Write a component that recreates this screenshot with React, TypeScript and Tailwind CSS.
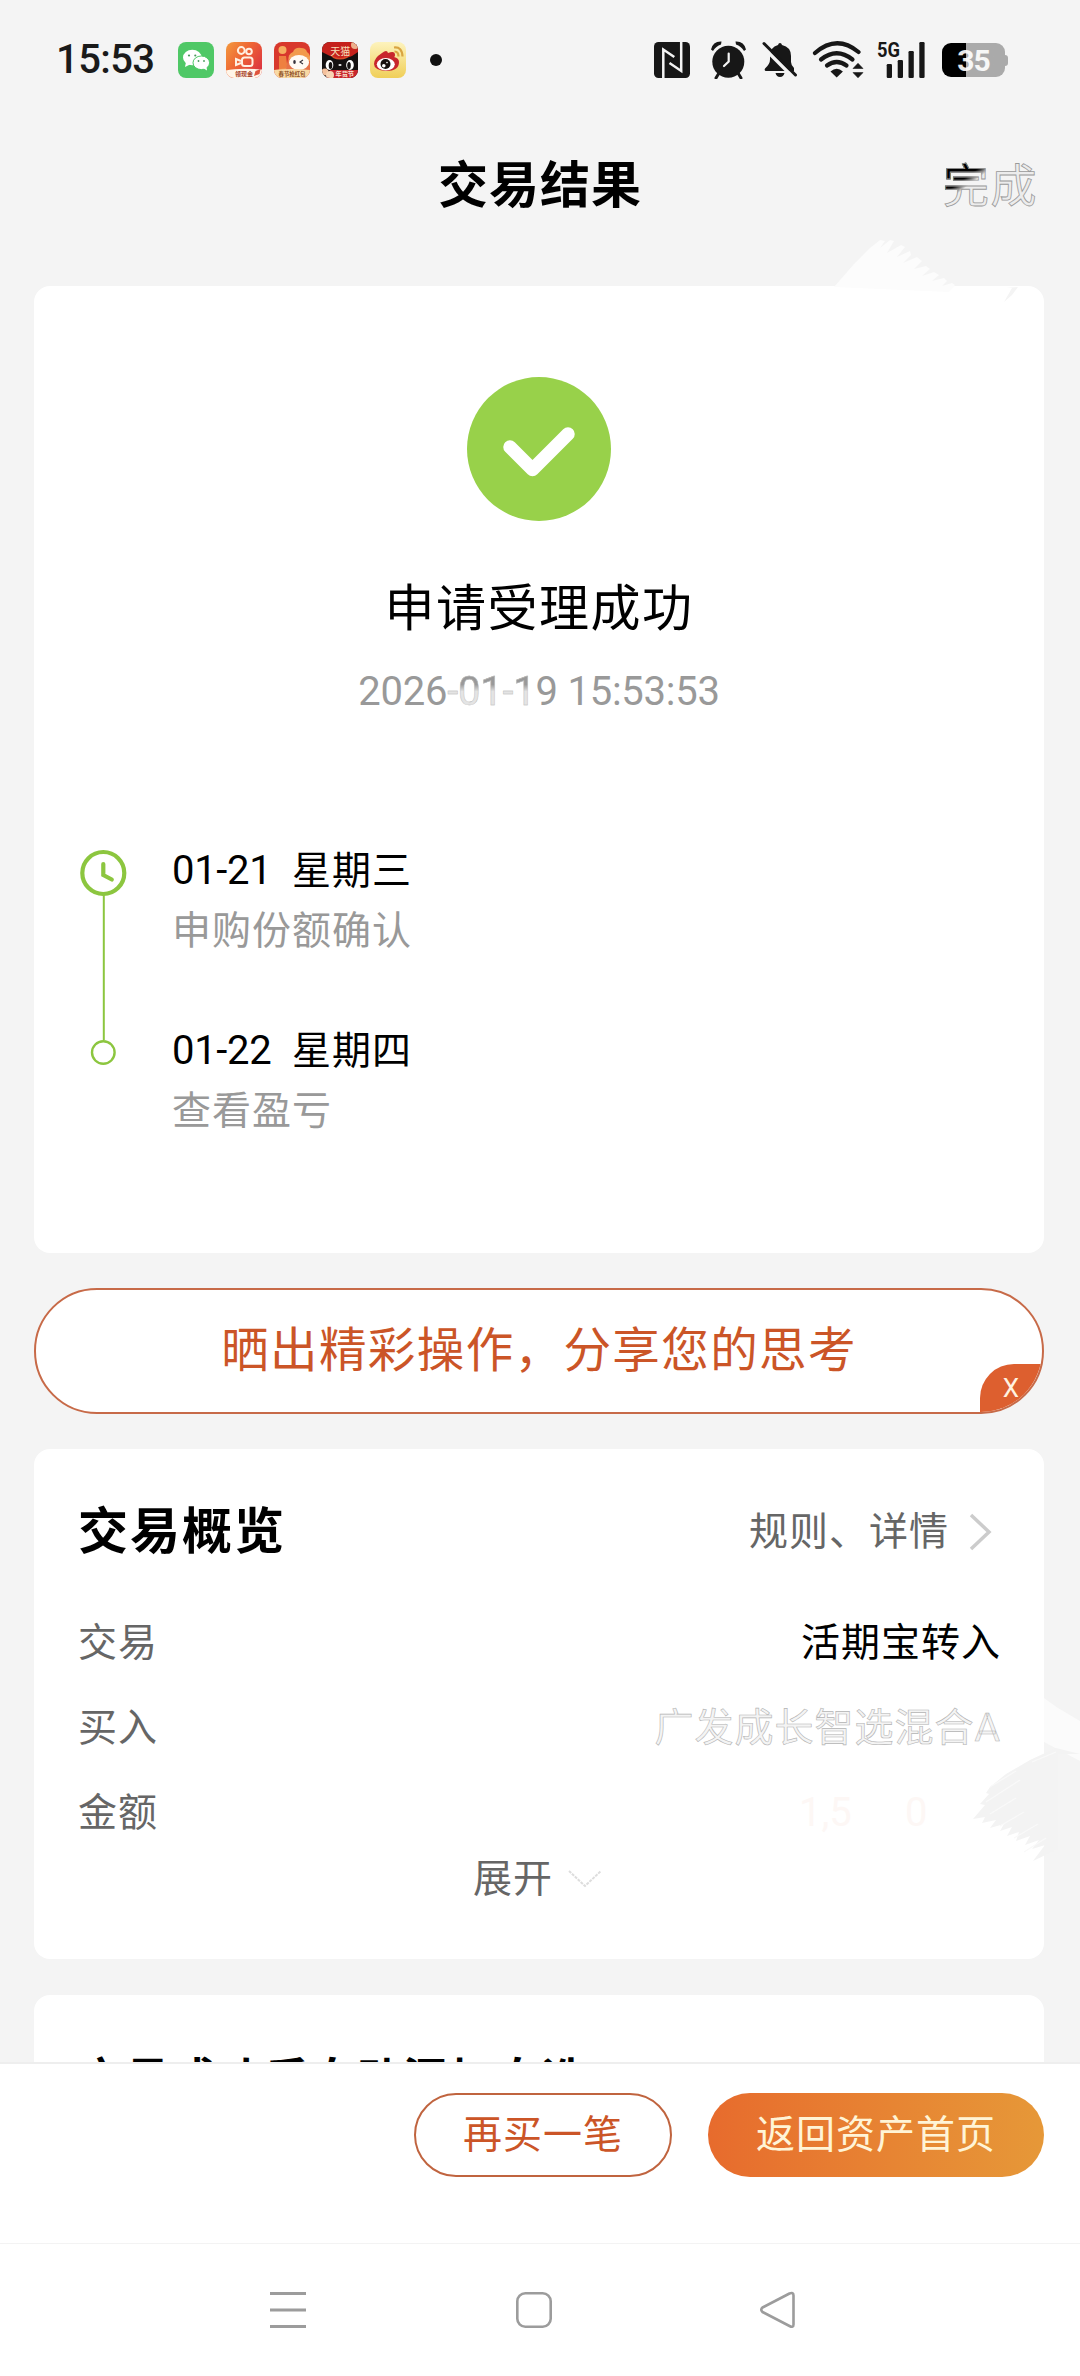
import React from "react";

const steps = [
  { date: "01-21", day: "星期三", note: "申购份额确认" },
  { date: "01-22", day: "星期四", note: "查看盈亏" },
];

export default function App() {
  return (
    <div className="relative w-[1080px] h-[2376px] flex flex-col overflow-hidden bg-[#f4f4f4] text-black font-['Roboto','Noto_Sans_CJK_SC',sans-serif]">
      <StatusBar />
      <Header />
      <main className="flex-1 min-h-0 overflow-hidden pl-[34px] pr-[36px] flex flex-col">
        <ResultCard />
        <ShareButton />
        <OverviewCard />
        <div className="shrink-0 mt-9 h-[200px] rounded-2xl bg-white pt-[55px] pl-[45px]">
          <div className="text-[44.5px] leading-[60px] font-bold tracking-[1.8px]">
            交易成功后自动添加自选
          </div>
        </div>
      </main>
      <Footer />
      <NavBar />
      <BrushMarks />
    </div>
  );
}

function StatusBar() {
  return (
    <div className="h-[120px] shrink-0 flex items-center pl-14 pr-[72px]">
      <div className="w-[122px] text-[40px] leading-none font-medium tracking-[-0.6px] text-[#1a1a1a]">
        15:53
      </div>
      <div className="flex gap-3">
        <WeChatIcon />
        <KuaishouIcon />
        <PartyIcon />
        <TmallIcon />
        <WeiboIcon />
      </div>
      <div className="ml-6 w-3 h-3 rounded-full bg-[#111]" />
      <div className="ml-auto flex items-center">
        <NfcIcon />
        <AlarmIcon />
        <BellOffIcon />
        <WifiIcon />
        <SignalIcon />
        <Battery />
      </div>
    </div>
  );
}

function WeChatIcon() {
  return (
    <svg width="36" height="36" viewBox="0 0 36 36">
      <rect width="36" height="36" rx="8" fill="#4fc866" />
      <ellipse cx="14.3" cy="15.5" rx="9.3" ry="7.8" fill="#fff" />
      <path d="M8 20l-1 5 5-2.500z" fill="#fff" />
      <ellipse cx="23.300" cy="20.800" rx="8.300" ry="6.800" fill="#fff" stroke="#4fc866" strokeWidth="1" />
      <path d="M25 26l4 2.500-.5-4z" fill="#fff" />
      <g fill="#4a9a5c">
        <circle cx="11" cy="13.500" r="1.100" />
        <circle cx="17.300" cy="13.500" r="1.100" />
        <circle cx="20.500" cy="19" r=".9" />
        <circle cx="26" cy="19" r=".9" />
      </g>
    </svg>
  );
}

function KuaishouIcon() {
  return (
    <svg width="36" height="36" viewBox="0 0 36 36">
      <defs>
        <linearGradient id="ks" x1="0" y1="0" x2="1" y2=".7">
          <stop offset="0" stopColor="#f39a3e" />
          <stop offset=".5" stopColor="#ee6434" />
          <stop offset="1" stopColor="#dc3540" />
        </linearGradient>
      </defs>
      <rect width="36" height="36" rx="8" fill="url(#ks)" />
      <path d="M0 28.500Q12 25.500 36 27.500V28a8 8 0 0 1-8 8H8a8 8 0 0 1-8-7.500z" fill="#fff5e8" />
      <g fill="none" stroke="#fff0e2" strokeWidth="2">
        <circle cx="15.300" cy="8.500" r="3.400" />
        <circle cx="23" cy="9.500" r="2.800" />
        <rect x="16" y="15.500" width="10.500" height="8.500" rx="2.500" />
        <path d="M15 19l-5-2v6l5-2" />
      </g>
      <text x="9" y="34" fontSize="6" fontWeight="700" fill="#a5402a">
        领现金
      </text>
      <path d="M28 34l1.500-5 5-2-1 5z" fill="#e0533c" />
    </svg>
  );
}

function PartyIcon() {
  return (
    <svg width="36" height="36" viewBox="0 0 36 36">
      <defs>
        <clipPath id="pt">
          <rect width="36" height="36" rx="8" />
        </clipPath>
      </defs>
      <g clipPath="url(#pt)">
        <rect width="36" height="36" fill="#d8382c" />
        <circle cx="8.500" cy="8" r="4" fill="#f6ae60" />
        <path d="M5 14h7l1 8-1 6H5z" fill="#ee8040" />
        <path d="M15 17q-1-5 4-7 2-5 8-4 5 0 6 4 4 2 3 9z" fill="#f29a4c" />
        <path d="M0 28l12-2 3-13 21 2v13z" fill="#f2a260" opacity=".55" />
        <ellipse cx="25" cy="20.500" rx="10" ry="7.500" fill="#fffaf4" />
        <ellipse cx="20.500" cy="20" rx="1.300" ry="2" fill="#36323c" />
        <path d="M29 18l-3 2 3 2" fill="none" stroke="#36323c" strokeWidth="1.100" />
        <path d="M0 28q18-2 36 0v8H0z" fill="#f8d9a4" />
      </g>
      <text x="4.500" y="34" fontSize="5.400" fontWeight="700" fill="#8a4c1c">
        春节抢红包
      </text>
    </svg>
  );
}

function TmallIcon() {
  return (
    <svg width="36" height="36" viewBox="0 0 36 36">
      <defs>
        <clipPath id="tm">
          <rect width="36" height="36" rx="8" />
        </clipPath>
      </defs>
      <g clipPath="url(#tm)">
        <rect width="36" height="36" fill="#141010" />
        <path d="M0 0h36v10l-6 4q-11 5-22 0l-8-4z" fill="#c5211c" />
        <circle cx="33" cy="3" r="4" fill="#ecb08c" />
        <path d="M8 12q10 8 20 0l-3 4q-7 3-14 0z" fill="#d94a28" />
        <ellipse cx="7.500" cy="23" rx="3.800" ry="5" fill="#fff" />
        <ellipse cx="28" cy="23" rx="3.800" ry="5" fill="#fff" />
        <ellipse cx="8.500" cy="23.500" rx="1.800" ry="3.500" fill="#141010" />
        <ellipse cx="27" cy="23.500" rx="1.800" ry="3.500" fill="#141010" />
        <ellipse cx="18" cy="23" rx="1.600" ry=".9" fill="#eee" />
        <path d="M8 28h28v8H4z" fill="#c9252d" />
        <circle cx="3" cy="30" r="3.500" fill="#f4c09c" />
        <circle cx="8" cy="33" r="4" fill="#f8d4b4" />
      </g>
      <text x="8.200" y="12.800" fontSize="10" fill="#f7dfb8">
        天猫
      </text>
      <text x="13.500" y="34" fontSize="6.200" fontWeight="700" fill="#fbe6d4">
        年货节
      </text>
    </svg>
  );
}

function WeiboIcon() {
  return (
    <svg width="36" height="36" viewBox="0 0 36 36">
      <defs>
        <linearGradient id="wb" x1="0" y1="0" x2="0" y2="1">
          <stop offset="0" stopColor="#fdf3bd" />
          <stop offset="1" stopColor="#f0cf58" />
        </linearGradient>
      </defs>
      <rect width="36" height="36" rx="8" fill="url(#wb)" />
      <path d="M4 22q0-6 8-11 5-4 6 0 7-3 7 2 0 2-1 2 5 1 5 5 0 9-13 9-12-1-12-7z" fill="#c8262c" />
      <ellipse cx="15.800" cy="22.300" rx="9" ry="6.200" fill="#fff" />
      <circle cx="15.500" cy="22" r="5" fill="#17110f" />
      <circle cx="13.800" cy="23.700" r="1.800" fill="#fff" />
      <circle cx="17" cy="20.600" r=".8" fill="#fff" />
      <path d="M24 5.500q8-1 8.500 9M24.500 9.500q4 0 4 5" fill="none" stroke="#d9a441" strokeWidth="2.200" />
    </svg>
  );
}

function NfcIcon() {
  return (
    <svg width="36" height="36" viewBox="0 0 36 36">
      <rect width="36" height="36" rx="4.500" fill="#171717" />
      <g fill="none" stroke="#f4f4f4" strokeWidth="2.500">
        <path d="M9.300 36V7.500l11 7.500" />
        <path d="M15.500 21l11.700 8V0" />
      </g>
    </svg>
  );
}

function AlarmIcon() {
  return (
    <svg className="ml-5" width="37" height="38" viewBox="0 0 37 38">
      <circle cx="18.300" cy="20.700" r="16" fill="#171717" />
      <path d="M1 8.500Q3 0 11.500.5L11 3.500Q6 5 3 10z" fill="#171717" />
      <path d="M36 8.500Q34 0 25.500.5l.5 3Q31 5 34 10z" fill="#171717" />
      <path d="M9 32l-3 5M28 32l3 5" stroke="#171717" strokeWidth="3" strokeLinecap="round" />
      <path d="M18.700 12.500v8L14 25" fill="none" stroke="#f4f4f4" strokeWidth="2.200" strokeLinecap="round" />
    </svg>
  );
}

function BellOffIcon() {
  return (
    <svg className="ml-[15px]" width="36" height="38" viewBox="0 0 36 38">
      <path d="M18 2q1.500 0 2 2 9 2 9 11v6q0 3 3 6v3H3.500q-2-1.500.5-3.500 4-4 4-8v-3Q8 6 16 4q.5-2 2-2z" fill="#171717" />
      <path d="M13.500 32h9q-1 4-4.500 4t-4.500-4z" fill="#171717" />
      <path d="M0 5l32 32" stroke="#f4f4f4" strokeWidth="3.500" />
      <path d="M2 2.500l31.500 31.500" stroke="#171717" strokeWidth="3" strokeLinecap="round" />
    </svg>
  );
}

function WifiIcon() {
  return (
    <svg className="ml-[14px]" width="52" height="38" viewBox="0 0 52 38">
      <g fill="none" stroke="#171717" strokeWidth="4.200" strokeLinecap="round">
        <path d="M3 12Q24.700-7 46.500 11" />
        <path d="M9 18.500q15.700-12.500 31.500 0" />
        <path d="M15 24.500q9.700-7 19.500 0" />
      </g>
      <path d="M18.500 30.500q6.200-5.500 12.400 0l-6.200 6z" fill="#171717" />
      <path d="M46 22.300l5 5.200H41zM46 36.800l5-5.200H41z" fill="#171717" stroke="#171717" strokeWidth=".6" strokeLinejoin="round" />
    </svg>
  );
}

function SignalIcon() {
  return (
    <svg className="ml-[13px] overflow-visible" width="48" height="38" viewBox="0 0 48 38">
      <text x="0" y="16" fontSize="21" fontWeight="700" textLength="23" lengthAdjust="spacingAndGlyphs" fill="#171717">
        5G
      </text>
      <g fill="#171717">
        <rect x="9.700" y="23" width="5.300" height="14" rx="1.200" />
        <rect x="20.700" y="19" width="5.300" height="18" rx="1.200" />
        <rect x="31.500" y="10" width="5.300" height="27" rx="1.200" />
        <rect x="42.300" y="1" width="5.300" height="36" rx="1.200" />
      </g>
    </svg>
  );
}

function Battery() {
  return (
    <div className="ml-[17px] flex items-center">
      <div className="w-[63px] h-[34px] rounded-[9px] bg-linear-to-r from-black from-38% to-[#aaa] to-38% flex items-center justify-center">
        <span className="text-[30px] leading-none font-bold tracking-[-1px] text-white/90 pt-px">
          35
        </span>
      </div>
      <div className="w-[3px] h-[11px] rounded-r bg-[#aaa]" />
    </div>
  );
}

function Header() {
  return (
    <div className="h-[166px] shrink-0 grid grid-cols-3 items-start pt-[31px] px-[42px]">
      <div />
      <h1 className="text-center text-[50px] leading-[70px] font-bold tracking-[1px]">
        交易结果
      </h1>
      <button className="justify-self-end text-[46px] leading-[70px] tracking-[1.5px] text-transparent bg-clip-text bg-linear-to-br from-black from-30% to-[#ececec] to-38% [-webkit-text-stroke:0.8px_#9a9a9a]">
        完成
      </button>
    </div>
  );
}

function ResultCard() {
  return (
    <section className="shrink-0 h-[967px] rounded-2xl bg-white flex flex-col items-center pt-[91px]">
      <svg width="144" height="144" viewBox="0 0 144 144">
        <circle cx="72" cy="72" r="72" fill="#98d14a" />
        <path d="M43 70l22.500 22.500L101 57" fill="none" stroke="#fff" strokeWidth="13.500" strokeLinecap="round" strokeLinejoin="round" />
      </svg>
      <div className="mt-[54px] text-[50px] leading-[68px] tracking-[1.500px]">
        申请受理成功
      </div>
      <div className="mt-[19px] text-[40px] leading-[60px] tracking-[-0.25px] text-[#999] whitespace-pre">
        2026
        <span className="text-transparent bg-clip-text bg-linear-to-b from-[#999] from-35% to-[#e4e4e4] to-50% [-webkit-text-stroke:0.4px_#bbb]">
          -01-1
        </span>
        9 15:53:53
      </div>
      <div className="self-stretch mt-[119px] pl-[46px] flex">
        <svg className="mt-[7px]" width="48" height="220" viewBox="0 0 48 220">
          <g fill="none" stroke="#8cc63f">
            <circle cx="23.300" cy="25" r="21" strokeWidth="4.200" />
            <path d="M23.300 16v11l8.500 4.500" strokeWidth="4.200" strokeLinecap="round" />
            <path d="M23.800 47v145" strokeWidth="2" />
            <circle cx="23.300" cy="204.500" r="11.300" strokeWidth="2.400" />
          </g>
        </svg>
        <div className="ml-11 flex flex-col gap-[60px]">
          {steps.map((step) => (
            <div key={step.date}>
              <div className="flex text-[39px] leading-[60px]">
                <span className="w-[120px] text-[40px] tracking-[-0.3px]">{step.date}</span>
                <span className="tracking-[1px]">{step.day}</span>
              </div>
              <div className="text-[39px] leading-[60px] tracking-[1px] text-[#999]">
                {step.note}
              </div>
            </div>
          ))}
        </div>
      </div>
    </section>
  );
}

function ShareButton() {
  return (
    <button className="relative shrink-0 mt-[35px] h-[126px] rounded-full border-2 border-[#c76a48] bg-white overflow-hidden text-[47.5px] leading-[64px] tracking-[1.400px] text-[#cb5527]">
      晒出精彩操作，分享您的思考
      <span className="absolute right-0 bottom-0 w-[62px] h-[48px] rounded-tl-[34px] bg-[#dd5f2f] text-[26px] leading-[49px] tracking-normal text-[#fff2e0] text-center">
        X
      </span>
    </button>
  );
}

function Row({ label, children }: { label: string; children: React.ReactNode }) {
  return (
    <div className="h-[85px] flex items-center justify-between tracking-[1px]">
      <span className="text-[#666]">{label}</span>
      {children}
    </div>
  );
}

function OverviewCard() {
  return (
    <section className="shrink-0 mt-[35px] h-[510px] rounded-2xl bg-white pl-11 pr-[43px] pt-[49px] text-[39px] leading-[60px]">
      <div className="h-[68px] flex items-center justify-between">
        <h2 className="text-[50px] leading-[68px] font-bold tracking-[2px]">
          交易概览
        </h2>
        <div className="flex items-center text-[#666] tracking-[1px]">
          规则、详情
          <svg className="ml-[20px] mr-[8px]" width="24" height="38" viewBox="0 0 24 38">
            <path d="M2 2l18 17L2 36" fill="none" stroke="#ccc" strokeWidth="3.500" />
          </svg>
        </div>
      </div>
      <div className="mt-[34px]">
        <Row label="交易">
          <span>活期宝转入</span>
        </Row>
        <Row label="买入">
          <span className="text-[#f4f4f4] [-webkit-text-stroke:0.6px_#b4b4b4]">
            广发成长智选混合A
          </span>
        </Row>
        <Row label="金额">
          <span className="w-[202px] flex text-[40px] tracking-normal text-[#fdf7f5]">
            <span className="w-[106px]">1,5</span>
            <span>0</span>
          </span>
        </Row>
      </div>
      <div className="-mt-[6px] flex items-center justify-center pr-[3px] text-[#666] tracking-[1px]">
        展开
        <svg className="ml-[14px]" width="36" height="24" viewBox="0 0 36 24">
          <path d="M2 4l16 15L34 4" fill="none" stroke="#ddd" strokeWidth="2" strokeDasharray="3 1" />
        </svg>
      </div>
    </section>
  );
}

function Footer() {
  return (
    <footer className="h-[181px] shrink-0 border-t-2 border-[#eee] bg-white flex justify-end items-start gap-9 pt-[29px] pr-9 text-[39px] tracking-[1px]">
      <button className="w-[258px] h-[84px] rounded-full border-2 border-[#c0643f] text-[#cb5527]">
        再买一笔
      </button>
      <button className="w-[336px] h-[84px] rounded-full bg-linear-to-r from-[#e76b2d] to-[#e69838] text-[#fff4d6]">
        返回资产首页
      </button>
    </footer>
  );
}

function NavBar() {
  return (
    <nav className="h-[133px] shrink-0 border-t border-[#f3f3f3] bg-white flex items-center pl-[270px]">
      <svg width="36" height="38" viewBox="0 0 36 38">
        <path d="M0 2.500h36M0 19h36M0 35.500h36" stroke="#9c9c9c" strokeWidth="3" />
      </svg>
      <svg className="ml-[210px]" width="36" height="38" viewBox="0 0 36 38">
        <rect x="1.300" y="2.300" width="33.400" height="33.400" rx="8" fill="none" stroke="#9c9c9c" strokeWidth="2.600" />
      </svg>
      <svg className="ml-[208px]" width="36" height="38" viewBox="0 0 36 38">
        <path d="M2.500 16.500L29.500 2.500q4-1.500 4 2v29q0 3.500-4 1.500L2.500 21q-2.500-2.300 0-4.500z" fill="none" stroke="#9c9c9c" strokeWidth="2.600" strokeLinejoin="round" />
      </svg>
    </nav>
  );
}

// eraser strokes left over the card edges
function BrushMarks() {
  return (
    <>
      <svg className="absolute left-[830px] top-[236px]" width="220" height="66" viewBox="0 0 220 66">
        <path
          d="M4 51L24 28 40 12 50 4l5 1-5 7 10-8 4 1-7 12 14-8 4 2-8 10 13-6 1 4-8 8 14-6 5 4-8 8 12-3 4 3-8 7 12-4 5 3-7 6 12-3 3 3-5 5 10-3 3 2-6 7z"
          fill="#fcfcfc"
        />
        <path d="M174 66l8-14h-6l12-1-6 8z" fill="#f4f4f4" />
      </svg>
      <svg className="absolute left-[960px] top-[1690px]" width="120" height="210" viewBox="0 0 120 210">
        <path d="M84 8l14 10 22 13v40L84 52z" fill="#fbfbfb" />
        <path
          d="M120 64L96 58 70 70 46 84 30 97l-4 6 3 1-9 10 5 1-12 14 12-2-3 6 14-3-6 8 14-4-4 7 12-4-5 9 12-4-3 9 14-5-5 9 14-5-7 9 13-4-12 16 25-12V64z"
          fill="#f3f3f3"
        />
        <path
          d="M30 97l26-16M26 112l34-22M30 124l26-16M40 136l24-14M54 148l24-14M64 162l22-14M72 72l24-10"
          stroke="#f9f9f9"
          strokeWidth="1.200"
        />
      </svg>
    </>
  );
}
